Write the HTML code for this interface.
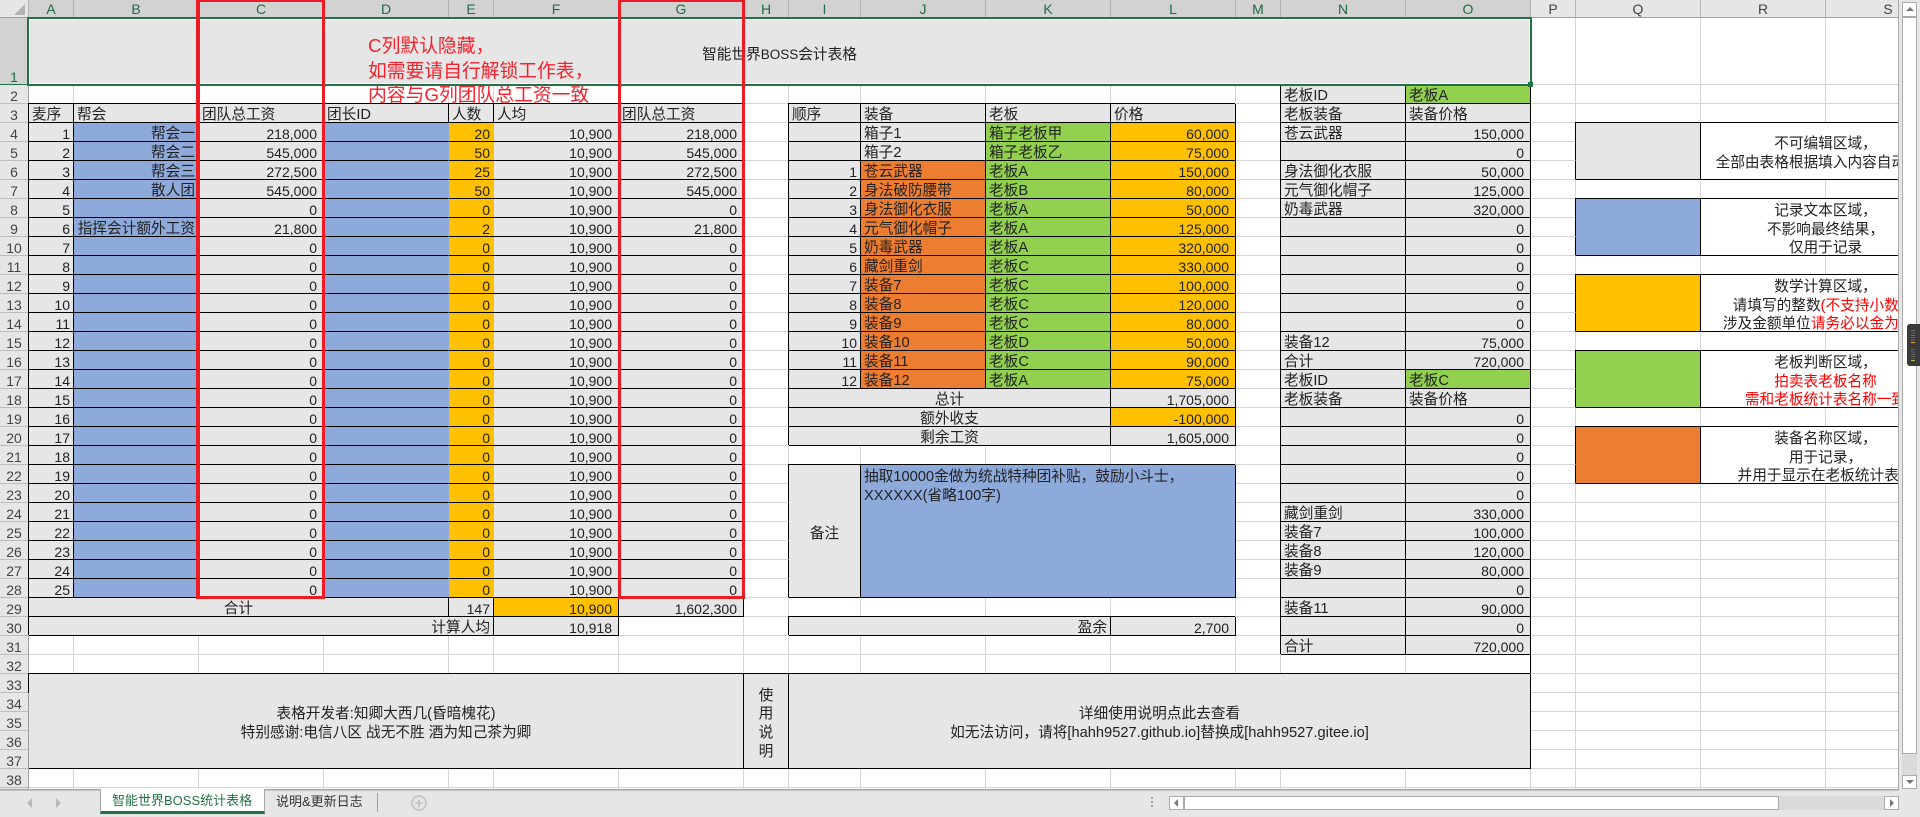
<!DOCTYPE html>
<html lang="zh"><head><meta charset="utf-8"><title>智能世界BOSS统计表格</title>
<style>
html,body{margin:0;padding:0;width:1920px;height:817px;overflow:hidden;background:#e6e6e6;font-family:"Liberation Sans","Noto Sans CJK SC",sans-serif;color:#222}
#w{position:absolute;left:0;top:0;width:1898px;height:789px;overflow:hidden;background:#fff}
table{border-collapse:separate;border-spacing:0;table-layout:fixed;width:1951px;font-size:14.67px}
col.s{width:45px}col.l{width:125px}
tr{height:19px}
td,th{box-sizing:border-box;border-right:1px solid #d4d4d4;border-bottom:1px solid #d4d4d4;padding:5px 3px 0;line-height:13px;height:19px;white-space:nowrap;overflow:hidden;vertical-align:top;font-weight:normal;text-align:left;background-clip:border-box}
th{background:#e6e6e6;text-align:center;font-size:14px;color:#444;padding:4px 0 0;line-height:14px;border-right:1px solid #9f9f9f;border-bottom:1px solid #bdbdbd}
tr.h th{padding-top:2px;line-height:15px;background:#e6e6e6;border-right:1px solid #b5b5b5;border-bottom:1px solid #9f9f9f;height:18px}
tr.h th.x{background:#d2d2d2;color:#1e6b45;border-right-color:#b0b0b0;border-bottom-color:#217346}
th.x{background:#d2d2d2;color:#1e6b45;border-right-color:#217346;vertical-align:bottom}
.g{background:#e6e6e6}.bl{background:#8eaadb}.ye{background:#ffc000}.gr{background:#92d050}.or{background:#ed7d31}
.b{border-right:1px solid #000;border-bottom:1px solid #000;box-shadow:-1px -1px 0 #000}
.t{border-bottom:1px solid #000;box-shadow:0 -1px 0 #000;border-right:1px solid #000}
td.nr{border-right-color:transparent}
td.kr{border-right-color:#000}
.r{text-align:right}.c{text-align:center}
.n{font-size:14px;padding-top:4px;line-height:14px}.m{padding-right:6px}
.mid{vertical-align:middle;line-height:18.6px;padding-top:0;white-space:nowrap}
.i{position:relative;top:3px}
.wrap{white-space:normal;line-height:18.7px;padding-top:3px}
.re{color:#f00}
.o{position:absolute;box-sizing:border-box}
</style></head><body>
<div id="w">
<table>
<colgroup><col style="width:29px"><col class="s"><col class="l"><col class="l"><col class="l"><col class="s"><col class="l"><col class="l"><col class="s"><col style="width:72px"><col class="l"><col class="l"><col class="l"><col class="s"><col class="l"><col class="l"><col class="s"><col class="l"><col class="l"><col class="l"></colgroup>
<tr class="h" style="height:18px"><th></th><th class="x">A</th><th class="x">B</th><th class="x">C</th><th class="x">D</th><th class="x">E</th><th class="x">F</th><th class="x">G</th><th class="x">H</th><th class="x">I</th><th class="x">J</th><th class="x">K</th><th class="x">L</th><th class="x">M</th><th class="x">N</th><th class="x">O</th><th>P</th><th>Q</th><th>R</th><th>S</th></tr>
<tr style="height:67px"><th class="x" style="height:67px;border-bottom-color:#217346">1</th><td colspan="15" class="g c" style="height:67px;vertical-align:middle;border-color:#e6e6e6;padding-top:7px">智能世界<span style="font-size:13.5px">BOSS</span>会计表格</td><td style="height:67px"></td><td style="height:67px"></td><td style="height:67px"></td><td style="height:67px"></td></tr>
<tr><th>2</th><td></td><td></td><td></td><td></td><td></td><td></td><td></td><td></td><td></td><td></td><td></td><td></td><td></td><td class="g b">老板ID</td><td class="gr b">老板A</td><td></td><td></td><td></td><td></td></tr>
<tr><th>3</th><td class="g b">麦序</td><td class="g b">帮会</td><td class="g b">团队总工资</td><td class="g b">团长ID</td><td class="g b">人数</td><td class="g b">人均</td><td class="g b">团队总工资</td><td></td><td class="g b">顺序</td><td class="g b">装备</td><td class="g b">老板</td><td class="g b">价格</td><td></td><td class="g b">老板装备</td><td class="g b">装备价格</td><td></td><td></td><td></td><td></td></tr>
<tr><th>4</th><td class="g b r n">1</td><td class="bl b r">帮会一</td><td class="g b r n m">218,000</td><td class="bl b nr"></td><td class="ye t nr r n">20</td><td class="g t r n m">10,900</td><td class="g b r n m">218,000</td><td></td><td class="g b"></td><td class="g b">箱子1</td><td class="gr b">箱子老板甲</td><td class="ye b r n m">60,000</td><td></td><td class="g b">苍云武器</td><td class="g b r n m">150,000</td><td class="kr"></td><td class="g b" rowspan="3"></td><td class="b c mid" colspan="2" rowspan="3"><div class="i">不可编辑区域&#65292;<br>全部由表格根据填入内容自动生成</div></td></tr>
<tr><th>5</th><td class="g b r n">2</td><td class="bl b r">帮会二</td><td class="g b r n m">545,000</td><td class="bl b nr"></td><td class="ye t nr r n">50</td><td class="g t r n m">10,900</td><td class="g b r n m">545,000</td><td></td><td class="g b"></td><td class="g b">箱子2</td><td class="gr b">箱子老板乙</td><td class="ye b r n m">75,000</td><td></td><td class="g b"></td><td class="g b r n m">0</td><td class="kr"></td></tr>
<tr><th>6</th><td class="g b r n">3</td><td class="bl b r">帮会三</td><td class="g b r n m">272,500</td><td class="bl b nr"></td><td class="ye t nr r n">25</td><td class="g t r n m">10,900</td><td class="g b r n m">272,500</td><td></td><td class="g b r n">1</td><td class="or b">苍云武器</td><td class="gr b">老板A</td><td class="ye b r n m">150,000</td><td></td><td class="g b">身法御化衣服</td><td class="g b r n m">50,000</td><td class="kr"></td></tr>
<tr><th>7</th><td class="g b r n">4</td><td class="bl b r">散人团</td><td class="g b r n m">545,000</td><td class="bl b nr"></td><td class="ye t nr r n">50</td><td class="g t r n m">10,900</td><td class="g b r n m">545,000</td><td></td><td class="g b r n">2</td><td class="or b">身法破防腰带</td><td class="gr b">老板B</td><td class="ye b r n m">80,000</td><td></td><td class="g b">元气御化帽子</td><td class="g b r n m">125,000</td><td></td><td></td><td></td><td></td></tr>
<tr><th>8</th><td class="g b r n">5</td><td class="bl b r"></td><td class="g b r n m">0</td><td class="bl b nr"></td><td class="ye t nr r n">0</td><td class="g t r n m">10,900</td><td class="g b r n m">0</td><td></td><td class="g b r n">3</td><td class="or b">身法御化衣服</td><td class="gr b">老板A</td><td class="ye b r n m">50,000</td><td></td><td class="g b">奶毒武器</td><td class="g b r n m">320,000</td><td class="kr"></td><td class="bl b" rowspan="3"></td><td class="b c mid" colspan="2" rowspan="3"><div class="i">记录文本区域&#65292;<br>不影响最终结果&#65292;<br>仅用于记录</div></td></tr>
<tr><th>9</th><td class="g b r n">6</td><td class="bl b r">指挥会计额外工资</td><td class="g b r n m">21,800</td><td class="bl b nr"></td><td class="ye t nr r n">2</td><td class="g t r n m">10,900</td><td class="g b r n m">21,800</td><td></td><td class="g b r n">4</td><td class="or b">元气御化帽子</td><td class="gr b">老板A</td><td class="ye b r n m">125,000</td><td></td><td class="g b"></td><td class="g b r n m">0</td><td class="kr"></td></tr>
<tr><th>10</th><td class="g b r n">7</td><td class="bl b r"></td><td class="g b r n m">0</td><td class="bl b nr"></td><td class="ye t nr r n">0</td><td class="g t r n m">10,900</td><td class="g b r n m">0</td><td></td><td class="g b r n">5</td><td class="or b">奶毒武器</td><td class="gr b">老板A</td><td class="ye b r n m">320,000</td><td></td><td class="g b"></td><td class="g b r n m">0</td><td class="kr"></td></tr>
<tr><th>11</th><td class="g b r n">8</td><td class="bl b r"></td><td class="g b r n m">0</td><td class="bl b nr"></td><td class="ye t nr r n">0</td><td class="g t r n m">10,900</td><td class="g b r n m">0</td><td></td><td class="g b r n">6</td><td class="or b">藏剑重剑</td><td class="gr b">老板C</td><td class="ye b r n m">330,000</td><td></td><td class="g b"></td><td class="g b r n m">0</td><td></td><td></td><td></td><td></td></tr>
<tr><th>12</th><td class="g b r n">9</td><td class="bl b r"></td><td class="g b r n m">0</td><td class="bl b nr"></td><td class="ye t nr r n">0</td><td class="g t r n m">10,900</td><td class="g b r n m">0</td><td></td><td class="g b r n">7</td><td class="or b">装备7</td><td class="gr b">老板C</td><td class="ye b r n m">100,000</td><td></td><td class="g b"></td><td class="g b r n m">0</td><td class="kr"></td><td class="ye b" rowspan="3"></td><td class="b c mid" colspan="2" rowspan="3"><div class="i">数学计算区域&#65292;<br>请填写的整数<span class="re">(不支持小数)&#65292;</span><br>涉及金额单位<span class="re">请务必以金为单位</span></div></td></tr>
<tr><th>13</th><td class="g b r n">10</td><td class="bl b r"></td><td class="g b r n m">0</td><td class="bl b nr"></td><td class="ye t nr r n">0</td><td class="g t r n m">10,900</td><td class="g b r n m">0</td><td></td><td class="g b r n">8</td><td class="or b">装备8</td><td class="gr b">老板C</td><td class="ye b r n m">120,000</td><td></td><td class="g b"></td><td class="g b r n m">0</td><td class="kr"></td></tr>
<tr><th>14</th><td class="g b r n">11</td><td class="bl b r"></td><td class="g b r n m">0</td><td class="bl b nr"></td><td class="ye t nr r n">0</td><td class="g t r n m">10,900</td><td class="g b r n m">0</td><td></td><td class="g b r n">9</td><td class="or b">装备9</td><td class="gr b">老板C</td><td class="ye b r n m">80,000</td><td></td><td class="g b"></td><td class="g b r n m">0</td><td class="kr"></td></tr>
<tr><th>15</th><td class="g b r n">12</td><td class="bl b r"></td><td class="g b r n m">0</td><td class="bl b nr"></td><td class="ye t nr r n">0</td><td class="g t r n m">10,900</td><td class="g b r n m">0</td><td></td><td class="g b r n">10</td><td class="or b">装备10</td><td class="gr b">老板D</td><td class="ye b r n m">50,000</td><td></td><td class="g b">装备12</td><td class="g b r n m">75,000</td><td></td><td></td><td></td><td></td></tr>
<tr><th>16</th><td class="g b r n">13</td><td class="bl b r"></td><td class="g b r n m">0</td><td class="bl b nr"></td><td class="ye t nr r n">0</td><td class="g t r n m">10,900</td><td class="g b r n m">0</td><td></td><td class="g b r n">11</td><td class="or b">装备11</td><td class="gr b">老板C</td><td class="ye b r n m">90,000</td><td></td><td class="g b">合计</td><td class="g b r n m">720,000</td><td class="kr"></td><td class="gr b" rowspan="3"></td><td class="b c mid" colspan="2" rowspan="3"><div class="i">老板判断区域&#65292;<br><span class="re">拍卖表老板名称</span><br><span class="re">需和老板统计表名称一致</span></div></td></tr>
<tr><th>17</th><td class="g b r n">14</td><td class="bl b r"></td><td class="g b r n m">0</td><td class="bl b nr"></td><td class="ye t nr r n">0</td><td class="g t r n m">10,900</td><td class="g b r n m">0</td><td></td><td class="g b r n">12</td><td class="or b">装备12</td><td class="gr b">老板A</td><td class="ye b r n m">75,000</td><td></td><td class="g b">老板ID</td><td class="gr b">老板C</td><td class="kr"></td></tr>
<tr><th>18</th><td class="g b r n">15</td><td class="bl b r"></td><td class="g b r n m">0</td><td class="bl b nr"></td><td class="ye t nr r n">0</td><td class="g t r n m">10,900</td><td class="g b r n m">0</td><td></td><td class="g b c" colspan="3">总计</td><td class="g b r n m">1,705,000</td><td></td><td class="g b">老板装备</td><td class="g b">装备价格</td><td class="kr"></td></tr>
<tr><th>19</th><td class="g b r n">16</td><td class="bl b r"></td><td class="g b r n m">0</td><td class="bl b nr"></td><td class="ye t nr r n">0</td><td class="g t r n m">10,900</td><td class="g b r n m">0</td><td></td><td class="g b c" colspan="3">额外收支</td><td class="ye b r n m">-100,000</td><td></td><td class="g b"></td><td class="g b r n m">0</td><td></td><td></td><td></td><td></td></tr>
<tr><th>20</th><td class="g b r n">17</td><td class="bl b r"></td><td class="g b r n m">0</td><td class="bl b nr"></td><td class="ye t nr r n">0</td><td class="g t r n m">10,900</td><td class="g b r n m">0</td><td></td><td class="g b c" colspan="3">剩余工资</td><td class="g b r n m">1,605,000</td><td></td><td class="g b"></td><td class="g b r n m">0</td><td class="kr"></td><td class="or b" rowspan="3"></td><td class="b c mid" colspan="2" rowspan="3"><div class="i">装备名称区域&#65292;<br>用于记录&#65292;<br>并用于显示在老板统计表中</div></td></tr>
<tr><th>21</th><td class="g b r n">18</td><td class="bl b r"></td><td class="g b r n m">0</td><td class="bl b nr"></td><td class="ye t nr r n">0</td><td class="g t r n m">10,900</td><td class="g b r n m">0</td><td></td><td></td><td></td><td></td><td></td><td></td><td class="g b"></td><td class="g b r n m">0</td><td class="kr"></td></tr>
<tr><th>22</th><td class="g b r n">19</td><td class="bl b r"></td><td class="g b r n m">0</td><td class="bl b nr"></td><td class="ye t nr r n">0</td><td class="g t r n m">10,900</td><td class="g b r n m">0</td><td class="kr"></td><td class="g b c mid" rowspan="7"><div class="i">备注</div></td><td class="bl b wrap" colspan="3" rowspan="7">抽取10000金做为统战特种团补贴&#65292;鼓励小斗士&#65292;<br>XXXXXX(省略100字)</td><td></td><td class="g b"></td><td class="g b r n m">0</td><td class="kr"></td></tr>
<tr><th>23</th><td class="g b r n">20</td><td class="bl b r"></td><td class="g b r n m">0</td><td class="bl b nr"></td><td class="ye t nr r n">0</td><td class="g t r n m">10,900</td><td class="g b r n m">0</td><td class="kr"></td><td></td><td class="g b"></td><td class="g b r n m">0</td><td></td><td></td><td></td><td></td></tr>
<tr><th>24</th><td class="g b r n">21</td><td class="bl b r"></td><td class="g b r n m">0</td><td class="bl b nr"></td><td class="ye t nr r n">0</td><td class="g t r n m">10,900</td><td class="g b r n m">0</td><td class="kr"></td><td></td><td class="g b">藏剑重剑</td><td class="g b r n m">330,000</td><td></td><td></td><td></td><td></td></tr>
<tr><th>25</th><td class="g b r n">22</td><td class="bl b r"></td><td class="g b r n m">0</td><td class="bl b nr"></td><td class="ye t nr r n">0</td><td class="g t r n m">10,900</td><td class="g b r n m">0</td><td class="kr"></td><td></td><td class="g b">装备7</td><td class="g b r n m">100,000</td><td></td><td></td><td></td><td></td></tr>
<tr><th>26</th><td class="g b r n">23</td><td class="bl b r"></td><td class="g b r n m">0</td><td class="bl b nr"></td><td class="ye t nr r n">0</td><td class="g t r n m">10,900</td><td class="g b r n m">0</td><td class="kr"></td><td></td><td class="g b">装备8</td><td class="g b r n m">120,000</td><td></td><td></td><td></td><td></td></tr>
<tr><th>27</th><td class="g b r n">24</td><td class="bl b r"></td><td class="g b r n m">0</td><td class="bl b nr"></td><td class="ye t nr r n">0</td><td class="g t r n m">10,900</td><td class="g b r n m">0</td><td class="kr"></td><td></td><td class="g b">装备9</td><td class="g b r n m">80,000</td><td></td><td></td><td></td><td></td></tr>
<tr><th>28</th><td class="g b r n">25</td><td class="bl b r"></td><td class="g b r n m">0</td><td class="bl b nr"></td><td class="ye t nr r n">0</td><td class="g t r n m">10,900</td><td class="g b r n m">0</td><td class="kr"></td><td></td><td class="g b"></td><td class="g b r n m">0</td><td></td><td></td><td></td><td></td></tr>
<tr><th>29</th><td class="g b c" colspan="4">合计</td><td class="g b r n">147</td><td class="ye b r n m">10,900</td><td class="g b r n m">1,602,300</td><td></td><td></td><td></td><td></td><td></td><td></td><td class="g b">装备11</td><td class="g b r n m">90,000</td><td></td><td></td><td></td><td></td></tr>
<tr><th>30</th><td class="g b r" colspan="5">计算人均</td><td class="g b r n m">10,918</td><td></td><td></td><td class="g b r" colspan="3">盈余</td><td class="g b r n m">2,700</td><td></td><td class="g b"></td><td class="g b r n m">0</td><td></td><td></td><td></td><td></td></tr>
<tr><th>31</th><td></td><td></td><td></td><td></td><td></td><td></td><td></td><td></td><td></td><td></td><td></td><td></td><td></td><td class="g b">合计</td><td class="g b r n m">720,000</td><td></td><td></td><td></td><td></td></tr>
<tr><th>32</th><td></td><td></td><td></td><td></td><td></td><td></td><td></td><td></td><td></td><td></td><td></td><td></td><td></td><td></td><td class="kr"></td><td></td><td></td><td></td><td></td></tr>
<tr><th>33</th><td class="g b c mid" colspan="7" rowspan="5"><div class="i">表格开发者:知卿大西几(昏暗槐花)<br>特别感谢:电信八区 战无不胜 酒为知己茶为卿</div></td><td class="g b c mid" rowspan="5"><div class="i">使<br>用<br>说<br>明</div></td><td class="g b c mid" colspan="7" rowspan="5"><div class="i">详细使用说明点此去查看<br>如无法访问&#65292;请将[hahh9527.github.io]替换成[hahh9527.gitee.io]</div></td><td></td><td></td><td></td><td></td></tr>
<tr><th>34</th><td></td><td></td><td></td><td></td></tr>
<tr><th>35</th><td></td><td></td><td></td><td></td></tr>
<tr><th>36</th><td></td><td></td><td></td><td></td></tr>
<tr><th>37</th><td></td><td></td><td></td><td></td></tr>
<tr><th>38</th><td></td><td></td><td></td><td></td><td></td><td></td><td></td><td></td><td></td><td></td><td></td><td></td><td></td><td></td><td></td><td></td><td></td><td></td><td></td></tr>
<tr><th></th><td></td><td></td><td></td><td></td><td></td><td></td><td></td><td></td><td></td><td></td><td></td><td></td><td></td><td></td><td></td><td></td><td></td><td></td><td></td></tr>
</table>
<div class="o" style="left:14px;top:4px;width:11px;height:11px;background:#b4b4b4;clip-path:polygon(100% 0,100% 100%,0 100%)"></div>
<div class="o" style="left:27px;top:17px;width:1505px;height:69px;border:2px solid #217346;box-shadow:inset 0 0 0 1px #fff"></div>
<div class="o" style="left:1528px;top:82px;width:5px;height:5px;background:#217346"></div>
<div class="o" style="left:196px;top:0;width:129px;height:599px;border-style:solid;border-color:#ed1c24;border-width:2px 3px 3px 4px"></div>
<div class="o" style="left:618px;top:0;width:127px;height:599px;border-style:solid;border-color:#ed1c24;border-width:2px 3px 3px 3px"></div>
<div class="o" style="left:368px;top:34px;font-size:18.8px;line-height:24.5px;color:#f5222d;white-space:nowrap">C列默认隐藏&#65292;<br>如需要请自行解锁工作表&#65292;<br>内容与G列团队总工资一致</div>
</div>
<div class="o" style="left:1898px;top:0;width:1px;height:790px;background:#a9a9a9"></div>
<div class="o" style="left:0;top:789px;width:1899px;height:1px;background:#a6a6a6"></div>
<div class="o" style="left:0;top:790px;width:1899px;height:1px;background:#c4c4c4"></div>
<div class="o" style="left:27px;top:798px;width:5px;height:10px;background:#b5b5b5;clip-path:polygon(100% 0,100% 100%,0 50%)"></div>
<div class="o" style="left:56px;top:798px;width:5px;height:10px;background:#b5b5b5;clip-path:polygon(0 0,100% 50%,0 100%)"></div>
<div class="o" style="left:100px;top:789px;width:165px;height:25px;background:#fff;border-left:1px solid #a6a6a6;border-right:1px solid #a6a6a6;border-bottom:3px solid #217346;color:#217346;font-size:13px;line-height:23px;padding-left:11px;white-space:nowrap">智能世界BOSS统计表格</div>
<div class="o" style="left:276px;top:790px;font-size:13px;line-height:23px;color:#333;white-space:nowrap">说明&amp;更新日志</div>
<div class="o" style="left:377px;top:793px;width:1px;height:19px;background:#9f9f9f"></div>
<div class="o" style="left:411px;top:795px;width:16px;height:16px;border:2px solid #c8c8c8;border-radius:50%;color:#c0c0c0;font-size:14px;line-height:12px;text-align:center;font-weight:bold">+</div>
<div class="o" style="left:1151px;top:797px;width:2px;height:2px;background:#a6a6a6;box-shadow:0 4px #a6a6a6,0 8px #a6a6a6"></div>
<div class="o" style="left:1169px;top:796px;width:730px;height:14px;background:#dadada"></div>
<div class="o" style="left:1169px;top:796px;width:15px;height:14px;background:#fff;border:1px solid #ababab"></div>
<div class="o" style="left:1174px;top:799px;width:4px;height:8px;background:#777;clip-path:polygon(100% 0,100% 100%,0 50%)"></div>
<div class="o" style="left:1184px;top:796px;width:595px;height:14px;background:#fff;border:1px solid #ababab"></div>
<div class="o" style="left:1884px;top:796px;width:15px;height:14px;background:#fff;border:1px solid #ababab"></div>
<div class="o" style="left:1890px;top:799px;width:4px;height:8px;background:#777;clip-path:polygon(0 0,100% 50%,0 100%)"></div>
<div class="o" style="left:1902px;top:2px;width:15px;height:787px;background:#dadada"></div>
<div class="o" style="left:1902px;top:2px;width:15px;height:15px;background:#fff;border:1px solid #ababab"></div>
<div class="o" style="left:1906px;top:7px;width:8px;height:4px;background:#777;clip-path:polygon(50% 0,100% 100%,0 100%)"></div>
<div class="o" style="left:1902px;top:17px;width:15px;height:737px;background:#fff;border:1px solid #ababab"></div>
<div class="o" style="left:1902px;top:775px;width:15px;height:14px;background:#fff;border:1px solid #ababab"></div>
<div class="o" style="left:1906px;top:780px;width:8px;height:4px;background:#777;clip-path:polygon(0 0,100% 0,50% 100%)"></div>
<div class="o" style="left:1907px;top:324px;width:13px;height:42px;background:#3a3a3a;border-radius:3px 0 0 3px"></div>
<div class="o" style="left:1911px;top:330px;width:4px;height:12px;background:repeating-linear-gradient(#666 0 1px,transparent 1px 2.4px)"></div>
<div class="o" style="left:1911px;top:342px;width:4px;height:1px;background:#e8a33d"></div>
<div class="o" style="left:1911px;top:349px;width:4px;height:10px;background:repeating-linear-gradient(#666 0 1px,transparent 1px 2.4px)"></div>
<div class="o" style="left:1911px;top:360px;width:4px;height:1px;background:#8fd14f"></div>
</body></html>
